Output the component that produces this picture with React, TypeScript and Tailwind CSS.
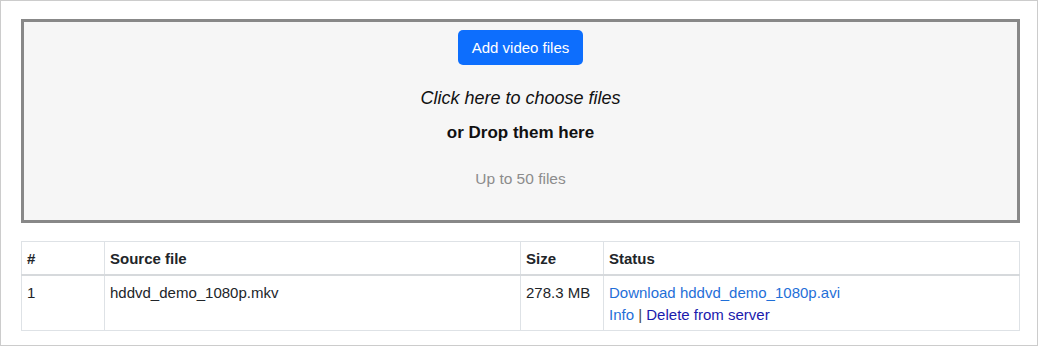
import { useState } from "react";

type ConvertedFile = {
  id: number;
  source: string;
  size: string;
  output: string;
};

const files: ConvertedFile[] = [
  { id: 1, source: "hddvd_demo_1080p.mkv", size: "278.3 MB", output: "hddvd_demo_1080p.avi" },
];

function DropZone() {
  const [hover, setHover] = useState(false);

  return (
    <div
      onMouseEnter={() => setHover(true)}
      onMouseLeave={() => setHover(false)}
      className={`flex h-[204px] cursor-pointer flex-col items-center border-[3px] border-[#888888] pt-[8px] ${hover ? "bg-[#f2f2f2]" : "bg-[#f6f6f6]"}`}
    >
      <button
        type="button"
        className="flex h-[35px] w-[125px] items-center justify-center rounded-[5px] bg-[#0d6efd] text-[15px] text-white"
      >
        Add video files
      </button>
      <p className="mt-[20px] text-[18px] leading-[27px] italic text-[#111111]">Click here to choose files</p>
      <p className="mt-[7px] text-[17px] leading-[27px] font-bold text-[#111111]">or Drop them here</p>
      <p className="mt-[21px] text-[15.5px] leading-[24px] text-[#8c8c8c]">Up to 50 files</p>
    </div>
  );
}

export default function App() {
  const cellCls = "border border-[#dee2e6] px-[5px] pt-[6px] pb-[4px] text-left align-top";

  return (
    <div className="h-[346px] w-[1038px] border border-[#cccccc] bg-white pl-[20px] pr-[17px] pt-[18px] font-['Liberation_Sans',Arial,sans-serif] text-[15px] leading-[22px] text-[#212529]">
      <DropZone />

      <table className="mt-[18px] w-full table-fixed border-collapse">
        <thead>
          <tr className="border-b-2 border-b-[#d6d9dc]">
            <th className={`${cellCls} w-[83px] font-bold`}>#</th>
            <th className={`${cellCls} w-[416px] font-bold`}>Source file</th>
            <th className={`${cellCls} w-[83px] font-bold`}>Size</th>
            <th className={`${cellCls} font-bold`}>Status</th>
          </tr>
        </thead>
        <tbody>
          {files.map((file) => (
            <tr key={file.id}>
              <td className={cellCls}>{file.id}</td>
              <td className={cellCls}>{file.source}</td>
              <td className={cellCls}>{file.size}</td>
              <td className={cellCls}>
                <a href="#" className="block text-[#1f6fd8]">
                  Download {file.output}
                </a>
                <div>
                  <a href="#" className="text-[#1f6fd8]">
                    Info
                  </a>{" "}
                  <span className="text-[#444444]">|</span>{" "}
                  <a href="#" className="text-[#1a1aad]">
                    Delete from server
                  </a>
                </div>
              </td>
            </tr>
          ))}
        </tbody>
      </table>
    </div>
  );
}
